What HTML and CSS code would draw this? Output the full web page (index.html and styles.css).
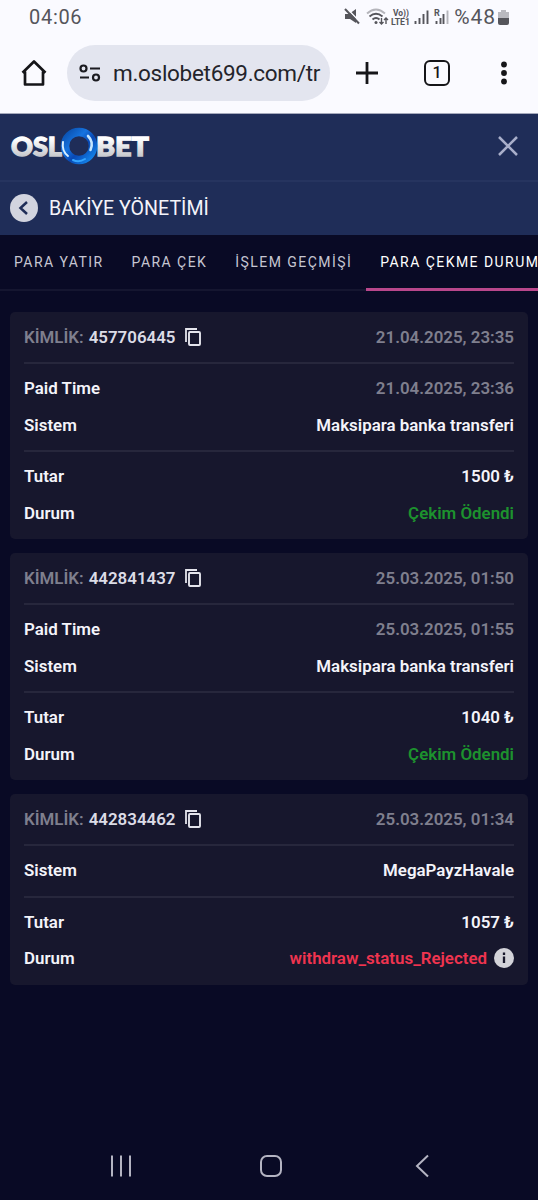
FILE: index.html
```html
<!DOCTYPE html>
<html lang="tr">
<head>
  <meta charset="utf-8">
  <meta name="viewport" content="width=device-width, initial-scale=1">
  <title>Oslobet</title>
  <link rel="stylesheet" href="styles.css">
</head>
<body>

<!-- phone status bar -->
<div class="status-bar">
  <span class="clock">04:06</span>
  <svg class="status-icons" width="108" height="22" viewBox="0 0 108 22">
    <!-- muted -->
    <path d="M1 8h4l7-5v14l-6-4H1z" fill="#55555b"/>
    <path d="M2.500 2l13.500 14" stroke="#fafaff" stroke-width="1.600"/>
    <path d="M1 3l14 14.500" stroke="#55555b" stroke-width="2"/>
    <!-- wifi -->
    <g fill="none" stroke-width="1.900">
      <path d="M23 7.500q9-8 18 0" stroke="#b5b5bb"/>
      <path d="M25.500 10.500q6.500-5.500 13 0M28.500 13.500q3.500-3 7 0" stroke="#55555b"/>
    </g>
    <circle cx="32" cy="16.500" r="1.500" fill="#55555b"/>
    <path d="M37.500 12v6M35.500 16l2 2 2-2M42 18v-6M40 14l2-2 2 2" fill="none" stroke="#55555b" stroke-width="1.400"/>
    <text class="tiny" x="49" y="9.500" textLength="16" lengthAdjust="spacingAndGlyphs">Vo))</text>
    <text class="tiny" x="47" y="19" textLength="19" lengthAdjust="spacingAndGlyphs">LTE1</text>
    <!-- signals -->
    <path d="M71.500 18v-3M75.500 18v-6M79.500 18V8M83.500 18V4.500" stroke="#55555b" stroke-width="1.900"/>
    <text class="tiny" x="90" y="10">R</text>
    <path d="M92.500 18v-3M96.500 18v-6M99.500 18V8" stroke="#55555b" stroke-width="1.900"/>
    <path d="M103.500 18V4.500" stroke="#b5b5bb" stroke-width="1.900"/>
  </svg>
  <span class="battery-text">%48</span>
  <svg class="battery" width="11" height="17" viewBox="0 0 11 17">
    <path d="M3 1h5v2h3v7H0V3h3z" fill="#b9b9bf"/>
    <path d="M0 9h11v5q0 2-2 2H2q-2 0-2-2z" fill="#55555b"/>
  </svg>
</div>

<!-- browser toolbar -->
<div class="browser-bar">
  <svg class="home" width="28" height="28" viewBox="0 0 28 28">
    <path d="M2.500 13.700L14 2.500l11.500 11.200M5 12.500V25.500h18V12.500" fill="none" stroke="#151519" stroke-width="2.700" stroke-linejoin="round"/>
  </svg>
  <div class="address">
    <svg width="22" height="18" viewBox="0 0 22 18" fill="none" stroke="#1b1b20" stroke-width="2.200">
      <circle cx="4.500" cy="4.500" r="3"/>
      <path d="M11 4.500h10M1 13.500h9"/>
      <circle cx="17" cy="13.500" r="3"/>
    </svg>
    <span class="url">m.oslobet699.com/tr</span>
  </div>
  <svg class="plus" width="24" height="24" viewBox="0 0 24 24">
    <path d="M12 1v22M1 12h22" stroke="#151519" stroke-width="2.800"/>
  </svg>
  <div class="tab-count">1</div>
  <svg class="dots" width="8" height="24" viewBox="0 0 8 24" fill="#151519">
    <circle cx="4" cy="3.500" r="2.900"/>
    <circle cx="4" cy="12" r="2.900"/>
    <circle cx="4" cy="20.500" r="2.900"/>
  </svg>
</div>

<header class="site-header">
  <svg class="logo" width="142" height="40" viewBox="0 0 142 40">
    <defs>
      <linearGradient id="silver" x1="0" y1="0" x2="0" y2="1">
        <stop offset="0.300" stop-color="#fff"/>
        <stop offset="1" stop-color="#b4b6bc"/>
      </linearGradient>
      <linearGradient id="ring" x1="0" y1="0" x2="1" y2="1">
        <stop offset="0" stop-color="#0a4fae"/>
        <stop offset="0.350" stop-color="#1674e0"/>
        <stop offset="0.600" stop-color="#0848b4"/>
        <stop offset="1" stop-color="#1488ee"/>
      </linearGradient>
    </defs>
    <text x="1" y="30" textLength="51" lengthAdjust="spacingAndGlyphs" fill="url(#silver)" stroke="url(#silver)">OSL</text>
    <text x="86" y="30" textLength="53" lengthAdjust="spacingAndGlyphs" fill="url(#silver)" stroke="url(#silver)">BET</text>
    <circle cx="69" cy="20" r="14" fill="none" stroke="url(#ring)" stroke-width="8.500"/>
    <path d="M53 16q-1.500 9 5 14" fill="none" stroke="#d8efff" stroke-width="2" stroke-linecap="round"/>
    <path d="M78 10q6 6 2.500 14" fill="none" stroke="#c4e6ff" stroke-width="2.600" stroke-linecap="round"/>
    <path d="M63 34q6 3 12-1" fill="none" stroke="#35a5ff" stroke-width="2" stroke-linecap="round"/>
  </svg>
  <svg class="close" width="20" height="20" viewBox="0 0 20 20">
    <path d="M1 1l18 18M19 1L1 19" stroke="#a9afca" stroke-width="2.500"/>
  </svg>
</header>

<div class="page-title">
  <svg width="28" height="28" viewBox="0 0 28 28">
    <circle cx="14" cy="14" r="14" fill="#d2d4df"/>
    <path d="M17 8l-6.500 6 6.500 6" fill="none" stroke="#1f2d58" stroke-width="2.500"/>
  </svg>
  <h1>BAKİYE YÖNETİMİ</h1>
</div>

<nav class="tabs">
  <a class="tab">PARA YATIR</a>
  <a class="tab">PARA ÇEK</a>
  <a class="tab">İŞLEM GEÇMİŞİ</a>
  <a class="tab active">PARA ÇEKME DURUMU</a>
</nav>

<svg class="defs" width="0" height="0">
  <symbol id="copy" viewBox="0 0 18 20">
    <path d="M2 15V2h11" fill="none" stroke="#e4e4ec" stroke-width="1.800"/>
    <rect x="5" y="5" width="11" height="13" rx="1" fill="none" stroke="#e4e4ec" stroke-width="1.900"/>
  </symbol>
</svg>

<main class="list">
  <section class="card">
    <div class="group">
      <div class="row"><span class="id"><span class="muted">KİMLİK:</span> 457706445 <svg class="copy" width="18" height="20"><use href="#copy"/></svg></span><span class="muted">21.04.2025, 23:35</span></div>
    </div>
    <div class="group">
      <div class="row"><span>Paid Time</span><span class="muted">21.04.2025, 23:36</span></div>
      <div class="row"><span>Sistem</span><span>Maksipara banka transferi</span></div>
    </div>
    <div class="group">
      <div class="row"><span>Tutar</span><span>1500 ₺</span></div>
      <div class="row"><span>Durum</span><span class="paid">Çekim Ödendi</span></div>
    </div>
  </section>

  <section class="card">
    <div class="group">
      <div class="row"><span class="id"><span class="muted">KİMLİK:</span> 442841437 <svg class="copy" width="18" height="20"><use href="#copy"/></svg></span><span class="muted">25.03.2025, 01:50</span></div>
    </div>
    <div class="group">
      <div class="row"><span>Paid Time</span><span class="muted">25.03.2025, 01:55</span></div>
      <div class="row"><span>Sistem</span><span>Maksipara banka transferi</span></div>
    </div>
    <div class="group">
      <div class="row"><span>Tutar</span><span>1040 ₺</span></div>
      <div class="row"><span>Durum</span><span class="paid">Çekim Ödendi</span></div>
    </div>
  </section>

  <section class="card">
    <div class="group">
      <div class="row"><span class="id"><span class="muted">KİMLİK:</span> 442834462 <svg class="copy" width="18" height="20"><use href="#copy"/></svg></span><span class="muted">25.03.2025, 01:34</span></div>
    </div>
    <div class="group">
      <div class="row"><span>Sistem</span><span>MegaPayzHavale</span></div>
    </div>
    <div class="group">
      <div class="row"><span>Tutar</span><span>1057 ₺</span></div>
      <div class="row">
        <span>Durum</span>
        <span class="rejected">withdraw_status_Rejected
          <svg width="20" height="20" viewBox="0 0 20 20">
            <circle cx="10" cy="10" r="10" fill="#d3d3d9"/>
            <path d="M10 4.500v2.500M10 8.500v6.500" stroke="#17172b" stroke-width="2.300"/>
          </svg>
        </span>
      </div>
    </div>
  </section>
</main>

<!-- android navigation -->
<footer class="nav-bar">
  <svg width="22" height="24" viewBox="0 0 22 24" stroke="#b4b4c2" stroke-width="2">
    <path d="M2 1.500v21M11 1.500v21M20 1.500v21"/>
  </svg>
  <svg width="24" height="24" viewBox="0 0 24 24" fill="none" stroke="#b4b4c2" stroke-width="2">
    <rect x="2" y="2" width="20" height="20" rx="6"/>
  </svg>
  <svg width="24" height="24" viewBox="0 0 24 24" fill="none" stroke="#b4b4c2" stroke-width="2">
    <path d="M18 1.500L7 12l11 10.500"/>
  </svg>
</footer>

</body>
</html>
```

FILE: styles.css
```css
* {
  box-sizing: border-box;
}

body {
  margin: 0;
  height: 1200px;
  display: flex;
  flex-direction: column;
  overflow: hidden;
  background: #090a25;
  color: #f4f4fa;
  font-family: Roboto, "Noto Sans", sans-serif;
}

svg {
  display: block;
  flex: none;
}

/* status bar */
.status-bar {
  height: 34px;
  display: flex;
  align-items: center;
  padding: 0 29px 0 29px;
  background: #fafaff;
  color: #55555b;
  font-size: 20px;
}

.clock {
  letter-spacing: 0.7px;
}

.status-icons {
  margin-left: auto;
}

.tiny {
  font: bold 9px Roboto, sans-serif;
  fill: #55555b;
}

.battery-text {
  margin-left: 2px;
  font-size: 21px;
  letter-spacing: 0.9px;
}

.battery {
  margin-left: 2px;
}

/* browser bar */
.browser-bar {
  height: 80px;
  display: flex;
  align-items: center;
  padding: 0 30px 2px 20px;
  background: #fafaff;
  border-bottom: 1px solid #a5a9bc;
}

.address {
  width: 263px;
  height: 56px;
  margin-left: 19px;
  padding: 0 10px 0 12px;
  display: flex;
  align-items: center;
  gap: 12px;
  border-radius: 28px;
  background: #e3e5ef;
}

.url {
  flex: 1;
  white-space: nowrap;
  color: #24242b;
  font-size: 22.5px;
  letter-spacing: -0.3px;
}

.plus {
  margin-left: 25px;
}

.tab-count {
  width: 26px;
  height: 26px;
  margin-left: 45px;
  border: 2.500px solid #151519;
  border-radius: 6px;
  color: #151519;
  font-size: 16px;
  font-weight: 500;
  line-height: 21px;
  text-align: center;
}

.dots {
  margin-left: auto;
}

/* site header */
.site-header {
  height: 68px;
  display: flex;
  align-items: center;
  justify-content: space-between;
  padding: 0 20px 2px 10px;
  background: #1f2d58;
  border-bottom: 2px solid #26345f;
}

.logo text {
  font: 900 27px Lato, sans-serif;
  stroke-width: 1.3px;
}

.page-title {
  height: 53px;
  display: flex;
  align-items: center;
  gap: 11px;
  padding: 0 0 1px 10px;
  background: #1f2d58;
}

.page-title h1 {
  margin: 1px 0 0;
  font-size: 19.6px;
  font-weight: 400;
}

.tabs {
  height: 56px;
  display: flex;
  flex: none;
  overflow: hidden;
}

.tab {
  flex: none;
  padding: 19px 14px 0;
  border-bottom: 2px solid #151630;
  color: #c6c6d2;
  font-size: 14px;
  line-height: 17px;
  letter-spacing: 1.45px;
  white-space: nowrap;
}

.tab.active {
  border-bottom: 3px solid #b9478c;
  color: #fff;
}

.defs {
  position: absolute;
}

/* withdrawals */
.list {
  padding: 21px 10px 0;
  display: flex;
  flex-direction: column;
  gap: 14px;
}

.card {
  padding: 0 14px;
  border-radius: 5px;
  background: #17172d;
}

.group {
  padding: 7px 0;
  border-bottom: 2px solid #27273c;
  margin-bottom: -1px;
}

.group:first-child {
  padding: 6.5px 0 7px;
}

.group:last-child {
  padding-bottom: 8px;
  border-bottom: 0;
  margin-bottom: 0;
}

.row {
  height: 36.5px;
  display: flex;
  align-items: center;
  justify-content: space-between;
  font-size: 16.9px;
  font-weight: 600;
}

.id,
.rejected {
  display: flex;
  align-items: center;
}

.id {
  gap: 5px;
  color: #dcdce6;
}

.copy {
  margin-left: 3px;
}

.muted {
  color: #7f7f8e;
}

.paid {
  color: #1d922e;
}

.rejected {
  gap: 7px;
  color: #f0344f;
}

.nav-bar {
  height: 69px;
  margin-top: auto;
  display: flex;
  align-items: center;
  justify-content: space-between;
  padding: 0 104px 0 110px;
}
```
